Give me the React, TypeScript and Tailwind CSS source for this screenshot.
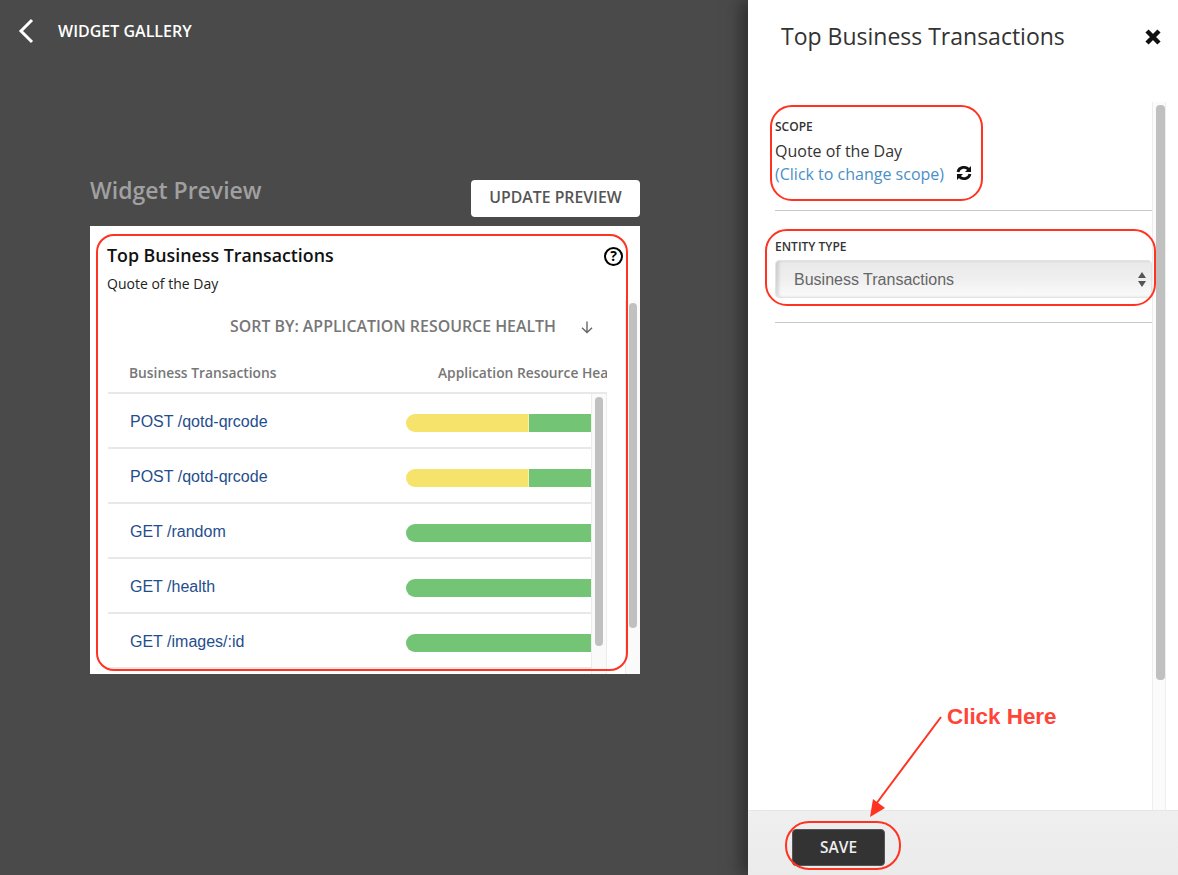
import React from "react";

const rows = [
  { name: "POST /qotd-qrcode", yellow: true },
  { name: "POST /qotd-qrcode", yellow: true },
  { name: "GET /random", yellow: false },
  { name: "GET /health", yellow: false },
  { name: "GET /images/:id", yellow: false },
];

const font = "font-['Open_Sans',sans-serif]";
const arial = "font-['Liberation_Sans',Arial,sans-serif]";

function Row({ name, yellow }: { name: string; yellow: boolean }) {
  return (
    <div className="flex h-[55px] items-center border-b-2 border-[#e8e8e8]">
      <span className={`${arial} ml-[22px] mt-[2px] w-[276px] text-[16px] text-[#1f4e8c]`}>{name}</span>
      <div className="mt-[5px] flex h-[18px] w-[185px] overflow-hidden rounded-l-[9px]">
        {yellow && <div className="h-full w-[122px] shrink-0 bg-[#f6e36c]" />}
        {yellow && <div className="h-full w-px shrink-0 bg-[#f5f0b0]" />}
        <div className="h-full flex-1 bg-[#74c476]" />
      </div>
    </div>
  );
}

function RedBox({ className }: { className: string }) {
  return <div className={`pointer-events-none absolute border-2 border-[#ff3320] ${className}`} />;
}

export default function App() {
  return (
    <div className={`${font} relative flex h-[875px] w-[1178px] overflow-hidden bg-[#4a4a4a]`}>
      {/* Left */}
      <div className="relative w-[748px] shrink-0">
        <div className="flex h-[62px] items-center pl-[17px]">
          <svg width="18" height="26" viewBox="0 0 18 26" fill="none" stroke="#fff" strokeWidth="3">
            <path d="M15 2 L4 13 L15 24" />
          </svg>
          <span className="ml-[23px] text-[16px] font-semibold leading-none text-white">WIDGET GALLERY</span>
        </div>
        <div className="ml-[90px] mt-[118px] w-[550px]">
          <div className="flex h-[46px] items-start justify-between">
            <span className="mt-[-4px] text-[23px] font-semibold leading-[28px] text-[#a0a0a0]">Widget Preview</span>
            <button className="h-[37px] w-[169px] rounded-[4px] bg-white pb-[1px] text-[15.8px] font-semibold text-[#555]">
              UPDATE PREVIEW
            </button>
          </div>
          <div className="relative h-[448px] overflow-hidden bg-white">
            <div className="flex items-center justify-between pl-[17px] pr-[17px] pt-[16px]">
              <span className="text-[17.8px] font-semibold leading-[26px] text-[#111]">Top Business Transactions</span>
              <span className="mt-[2px] flex h-[19px] w-[19px] items-center justify-center rounded-full border-2 border-black text-[14px] font-bold leading-none text-black">
                ?
              </span>
            </div>
            <div className="ml-[17px] mt-[7px] text-[14px] leading-[18px] text-[#222]">Quote of the Day</div>
            <div className="mt-[21px] flex h-[24px] items-center pl-[140px] pt-[1px]">
              <span className="text-[15.9px] font-semibold text-[#777]">SORT BY: APPLICATION RESOURCE HEALTH</span>
              <svg className="ml-[24px]" width="14" height="14" viewBox="0 0 14 14" fill="none" stroke="#666" strokeWidth="1.4">
                <path d="M7 1.5 V12.5 M2 7.8 L7 12.5 L12 7.8" />
              </svg>
            </div>
            <div className="ml-[18px] mt-[18px] w-[499px] overflow-hidden">
              <div className="flex h-[38px] items-center overflow-hidden border-b-2 border-[#e8e8e8] pb-[1px] text-[13.8px] font-semibold text-[#777]">
                <span className="ml-[21px] w-[309px] shrink-0">Business Transactions</span>
                <span className="shrink-0 whitespace-nowrap">Application Resource Health</span>
              </div>
              <div className="flex">
                <div className="w-[483px] shrink-0">
                  {rows.map((r, i) => (
                    <Row key={i} name={r.name} yellow={r.yellow} />
                  ))}
                </div>
                <div className="h-[290px] w-[16px] shrink-0 border-x border-[#ececec] bg-[#fafafa] pl-[3px] pt-[3px]">
                  <div className="h-[249px] w-[8px] rounded-[4px] bg-[#c0c0c0]" />
                </div>
              </div>
            </div>
            <div className="absolute bottom-0 right-0 h-[374px] w-[15px] border-l border-[#ececec] bg-[#fafafa] pl-[3px] pt-[3px]">
              <div className="h-[325px] w-[8px] rounded-[4px] bg-[#c0c0c0]" />
            </div>
          </div>
        </div>
      </div>

      {/* Right */}
      <div className="relative flex w-[430px] shrink-0 flex-col bg-white shadow-[-8px_0_14px_rgba(30,30,30,0.55)]">
        <div className="flex h-[102px] shrink-0 items-start justify-between pl-[33px] pr-[17px] pt-[18px]">
          <span className="text-[23px] leading-[36px] text-[#333]">Top Business Transactions</span>
          <svg className="mt-[11px]" width="16" height="16" viewBox="0 0 16 16" fill="none" stroke="#111" strokeWidth="4.5">
            <path d="M2 2 L14 14 M14 2 L2 14" />
          </svg>
        </div>
        <div className="flex min-h-0 flex-1">
          <div className="ml-[27px] w-[377px] shrink-0">
            <div className="h-[109px] border-b border-[#c8c8c8] pt-[17px]">
              <div className="text-[12px] font-semibold leading-[15px] text-[#333]">SCOPE</div>
              <div className="mt-[5px] text-[16px] leading-[24px] text-[#333]">Quote of the Day</div>
              <div className="flex items-center">
                <span className="text-[16px] leading-[22px] text-[#4a90c8]">(Click to change scope)</span>
                <svg className="ml-[12px] mt-[-2px]" width="16" height="16" viewBox="0 0 16 16" fill="none" stroke="#111" strokeWidth="2.8">
                  <path d="M2 7 A6 5.6 0 0 1 13 5" />
                  <path d="M14 9 A6 5.6 0 0 1 3 11" />
                  <path d="M15 1 V7 H9 Z" fill="#111" stroke="none" />
                  <path d="M1 15 V9 H7 Z" fill="#111" stroke="none" />
                </svg>
              </div>
            </div>
            <div className="h-[112px] border-b border-[#c8c8c8] pt-[28px]">
              <div className="text-[12px] font-semibold leading-[15px] text-[#333]">ENTITY TYPE</div>
              <div className="mt-[6px] flex h-[38px] items-center justify-between rounded-[4px] border border-[#e4e4e4] bg-gradient-to-b from-[#e9e9e9] via-[#efefef] to-[#fbfbfb] pl-[18px] pr-[5px] pt-[1px] shadow-[inset_3px_0_3px_rgba(0,0,0,0.12)]">
                <span className={`${arial} text-[16px] text-[#666]`}>Business Transactions</span>
                <svg width="8" height="15" viewBox="0 0 8 15" fill="#555">
                  <path d="M4 0 L8 6 H0 Z M4 15 L8 9 H0 Z" />
                </svg>
              </div>
            </div>
          </div>
          <div className="w-[14px] shrink-0 border-x border-[#eeeeee] bg-[#fbfbfb] pl-[3px] pt-[3px]">
            <div className="h-[575px] w-[9px] rounded-[4px] bg-[#c0c0c0]" />
          </div>
        </div>
        <div className="flex h-[65px] shrink-0 items-center border-t border-[#e6e6e6] bg-gradient-to-b from-[#efefef] to-[#ebebeb] pl-[44px] pt-[9px]">
          <button className="h-[37px] w-[93px] rounded-[4px] border border-[#555] bg-[#333] text-[15.5px] font-semibold text-[#eee]">
            SAVE
          </button>
        </div>
      </div>

      {/* Annotations */}
      <RedBox className="left-[96px] top-[234px] h-[437px] w-[532px] rounded-[18px]" />
      <RedBox className="left-[770px] top-[105px] h-[96px] w-[213px] rounded-[22px]" />
      <RedBox className="left-[765px] top-[229px] h-[77px] w-[391px] rounded-[22px]" />
      <RedBox className="left-[785px] top-[821px] h-[49px] w-[116px] rounded-[24px]" />
      <span className={`${arial} absolute left-[947px] top-[704px] text-[22.4px] font-bold leading-[26px] text-[#ff4438]`}>
        Click Here
      </span>
      <svg className="pointer-events-none absolute left-[860px] top-[710px]" width="90" height="112" viewBox="0 0 90 112" fill="none">
        <path d="M81 7 L16 94" stroke="#ff3320" strokeWidth="2" />
        <path d="M10 107 L13 89 L25 98 Z" fill="#ff3320" />
      </svg>
    </div>
  );
}
